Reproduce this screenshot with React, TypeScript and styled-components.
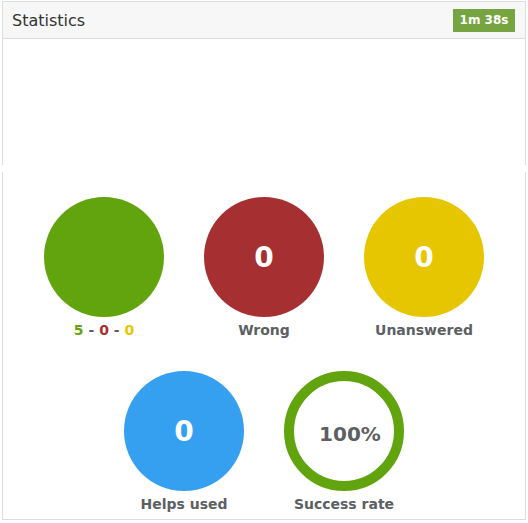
import styled, { createGlobalStyle } from "styled-components";

const GlobalStyle = createGlobalStyle`
  body {
    margin: 0;
    background: #fff;
    font-family: "DejaVu Sans", "Liberation Sans", sans-serif;
  }
`;

const Page = styled.div`
  padding: 1px 2px 0 2px;
`;

const Panel = styled.section`
  border: 1px solid #dddddd;
  border-bottom: none;
  background: #fff;
`;

const Header = styled.div`
  display: flex;
  align-items: center;
  justify-content: space-between;
  height: 36px;
  padding: 0 10px 0 9px;
  background: #f7f7f7;
  border-bottom: 1px solid #dddddd;
`;

const Title = styled.h3`
  margin: 0;
  font-size: 16px;
  font-weight: normal;
  color: #333;
`;

const Badge = styled.span`
  display: inline-flex;
  align-items: center;
  justify-content: center;
  width: 62px;
  height: 23px;
  background: #75a440;
  color: #fff;
  font-size: 12px;
  font-weight: bold;
`;

const EmptyBody = styled.div`
  height: 126px;
`;

const StatsPanel = styled.section`
  margin-top: 7px;
  border: 1px solid #dddddd;
  border-top: none;
  padding: 25px 0 5px;
  display: flex;
  flex-wrap: wrap;
  justify-content: center;
  row-gap: 31px;
`;

const Item = styled.div`
  width: 160px;
  display: flex;
  flex-direction: column;
  align-items: center;
`;

const Circle = styled.div<{ $bg?: string; $ring?: string }>`
  box-sizing: border-box;
  width: 120px;
  height: 120px;
  border-radius: 50%;
  background: ${(p) => p.$bg ?? "#fff"};
  border: ${(p) => (p.$ring ? `10px solid ${p.$ring}` : "none")};
  padding: ${(p) => (p.$ring ? "5px 0 0 12px" : "0")};
  display: flex;
  align-items: center;
  justify-content: center;
  color: ${(p) => (p.$ring ? "#5c5f63" : "#fff")};
  font-size: ${(p) => (p.$ring ? "20px" : "28px")};
  font-weight: bold;
`;

const Label = styled.div`
  margin-top: 3px;
  line-height: 20px;
  font-size: 14px;
  font-weight: bold;
  color: #5c5f63;
`;

const Part = styled.span<{ $color: string }>`
  color: ${(p) => p.$color};
`;

const GREEN = "#62a40d";
const RED = "#a52f31";
const YELLOW = "#e6c600";
const BLUE = "#35a0ef";

export default function App() {
  return (
    <Page>
      <GlobalStyle />
      <Panel>
        <Header>
          <Title>Statistics</Title>
          <Badge>1m 38s</Badge>
        </Header>
        <EmptyBody />
      </Panel>
      <StatsPanel>
        <Item>
          <Circle $bg={GREEN} />
          <Label>
            <Part $color={GREEN}>5</Part> - <Part $color={RED}>0</Part> -{" "}
            <Part $color={YELLOW}>0</Part>
          </Label>
        </Item>
        <Item>
          <Circle $bg={RED}>0</Circle>
          <Label>Wrong</Label>
        </Item>
        <Item>
          <Circle $bg={YELLOW}>0</Circle>
          <Label>Unanswered</Label>
        </Item>
        <Item>
          <Circle $bg={BLUE}>0</Circle>
          <Label>Helps used</Label>
        </Item>
        <Item>
          <Circle $ring={GREEN}>100%</Circle>
          <Label>Success rate</Label>
        </Item>
      </StatsPanel>
    </Page>
  );
}
